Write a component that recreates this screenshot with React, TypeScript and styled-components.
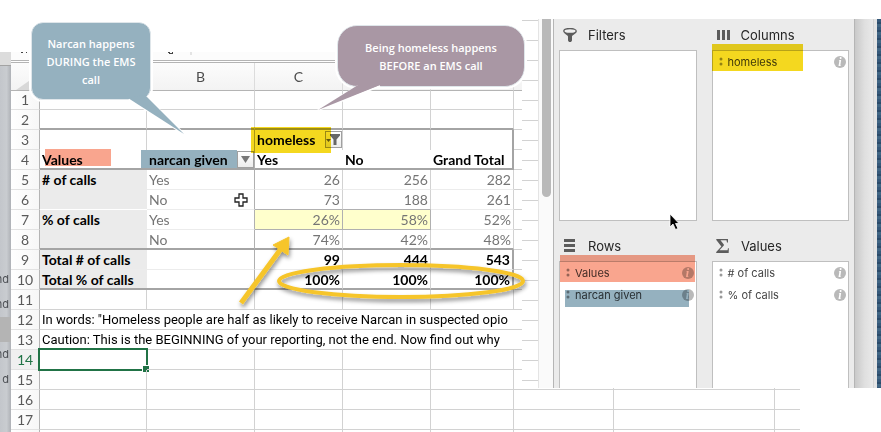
import React from "react";
import styled, { createGlobalStyle, css } from "styled-components";

const GlobalStyle = createGlobalStyle`
  * { box-sizing: border-box; }
  body { margin: 0; background: #fff; overflow: hidden; }
  button { margin: 0; padding: 0; font: inherit; cursor: pointer; }
`;

const ui = `Inter, "Liberation Sans", sans-serif`;
const cellFont = `Lato, "Open Sans", sans-serif`;

const Page = styled.main`
  position: relative;
  display: grid;
  grid-template-columns: 522px minmax(0, 1fr);
  grid-template-rows: 52px auto;
  height: 100vh;
  overflow: hidden;
  font-family: ${ui};
`;

/* ---------- worksheet ---------- */

const Workbook = styled.section`
  grid-column: 1 / 3;
  grid-row: 2;
  display: flex;
  min-width: 0;
`;

const SideStrip = styled.aside`
  flex: 0 0 11px;
  overflow: hidden;
  border-top: 13px solid #dcdcdc;
  background: linear-gradient(90deg, #c3c6cb, #c9ccd0 60%, #aeb1b6);
  color: #4c4f54;
`;

const SideList = styled.ul`
  margin: 0;
  padding: 201px 0 0;
  border-top: 1px solid #a3a3a3;
  list-style: none;
  font-size: 11px;
  line-height: 25px;
`;

const SideItem = styled.li<{ $active?: boolean }>`
  display: flex;
  justify-content: flex-end;
  height: 25px;
  padding-right: 2px;
  background: ${(p) => (p.$active ? "#b4b4b4" : "transparent")};
`;

const Sheet = styled.div`
  flex: none;
`;

const FormulaBar = styled.div`
  display: flex;
  height: 11px;
  border-bottom: 1px solid #b4b4b4;
  background: linear-gradient(#fcfcfc 8px, #b4b4b4 8px 9px, #fff 9px);
`;

const FormulaEdge = styled.svg`
  display: block;
  width: 190px;
  height: 4px;
`;

const Grid = styled.table`
  table-layout: fixed;
  width: 789px;
  border-collapse: separate;
  border-spacing: 0;
  font-family: ${cellFont};
  font-size: 14px;
  line-height: 18px;
  color: #000;
`;

const ColumnHead = styled.th`
  height: 28px;
  padding: 0;
  border-right: 1px solid #dcdcdc;
  border-bottom: 1px solid #b4b4b4;
  background: linear-gradient(#fcfcfc, #f3f3f3);
  font-size: 14px;
  font-weight: 400;
  color: #4d4d4d;
`;

const Corner = styled.svg`
  display: block;
  margin: 12px 0 0 5px;
`;

const RowHead = styled.th<{ $active?: boolean; $first?: boolean }>`
  height: ${(p) => (p.$first ? 19 : 20)}px;
  padding: 0;
  border-right: 1px solid #b4b4b4;
  border-bottom: 1px solid #e2e2e2;
  background: linear-gradient(90deg, #fff, #f7f7f7);
  font-size: 14px;
  font-weight: 400;
  color: #5a5a5a;
  ${(p) => p.$active && css`color: #217346; background: #f0f0f0;`}
`;

type Edge = "none" | "light" | "line" | "mid" | "heavy" | "white";
const edges: Record<Edge, string> = {
  none: "0 solid transparent",
  light: "1px solid #ececec",
  line: "1px solid #d2d2d2",
  mid: "1px solid #b0b0b0",
  heavy: "2px solid #a4a4a4",
  white: "1px solid #fff",
};

const Cell = styled.td<{
  $right?: Edge;
  $bottom?: Edge;
  $fill?: string;
  $bold?: boolean;
  $muted?: boolean;
  $num?: boolean;
}>`
  position: relative;
  padding: ${(p) => (p.$bottom === "heavy" ? 2 : 0)}px 2px 0;
  border-right: ${(p) => edges[p.$right ?? "line"]};
  border-bottom: ${(p) => edges[p.$bottom ?? "line"]};
  background: ${(p) => p.$fill ?? "transparent"};
  font-weight: ${(p) => (p.$bold ? 700 : 400)};
  line-height: ${(p) => (p.$bottom === "heavy" ? 16 : 18)}px;
  color: ${(p) => (p.$muted ? "#757575" : "#000")};
  text-align: ${(p) => (p.$num ? "right" : "left")};
  white-space: nowrap;
`;

const NoteCell = styled(Cell)`
  font-family: Roboto, "Open Sans", sans-serif;
  font-size: 13px;
`;

const Label = styled.span`
  position: relative;
  z-index: 1;
`;

const Mark = styled.span<{ $tone: "coral" | "blue" | "yellow" }>`
  position: absolute;
  mix-blend-mode: multiply;
  ${(p) => p.$tone === "coral" && css`background: #f9a58e; inset: -1px 36px 2px 5px;`}
  ${(p) => p.$tone === "blue" && css`background: #95b1bf; inset: 0 17px 0 -6px;`}
  ${(p) => p.$tone === "yellow" && css`background: #f4d81f; inset: -3px 11px -3px -4px; z-index: 2;`}
`;

const FilterButton = styled.button`
  position: absolute;
  right: 0;
  top: 1px;
  display: grid;
  place-items: center;
  width: 17px;
  height: 17px;
  border: 1px solid #a0a0a0;
  background: linear-gradient(#fff, #ececec);
`;

const Selection = styled.span`
  position: absolute;
  inset: -2px -2px -2px -2px;
  border: 2px solid #217346;
  &::after {
    content: "";
    position: absolute;
    right: -3px;
    bottom: -3px;
    width: 6px;
    height: 6px;
    border: solid #fff;
    border-width: 1px 0 0 1px;
    background: #217346;
  }
`;

const columnWidths = [29, 107, 108, 88, 88, 83, 100, 161, 25];
const columnNames = ["", "B", "C", "", "", "", "", ""];

const summary = [
  { n: 5, name: "# of calls", given: "Yes", v: ["26", "256", "282"] },
  { n: 6, name: "", given: "No", v: ["73", "188", "261"] },
  { n: 7, name: "% of calls", given: "Yes", v: ["26%", "58%", "52%"] },
  { n: 8, name: "", given: "No", v: ["74%", "42%", "48%"] },
];

const totals = [
  { n: 9, name: "Total # of calls", v: ["99", "444", "543"] },
  { n: 10, name: "Total % of calls", v: ["100%", "100%", "100%"] },
];

const Rest = () => (<><Cell /><Cell /><Cell $right="none" /></>);

const EmptyRow = ({ n, bottom = "line" }: { n: number | null; bottom?: Edge }) => (
  <tr>
    <RowHead scope="row" $first={n === 1}>{n}</RowHead>
    {[0, 1, 2, 3, 4].map((i) => <Cell key={i} $bottom={bottom} />)}
    <Rest />
  </tr>
);

const Worksheet = () => (
  <Grid>
    <colgroup>{columnWidths.map((w, i) => <col key={i} width={w} />)}</colgroup>
    <thead>
      <tr>
        <ColumnHead><Corner width="20" height="14"><path d="M20 0V14H0Z" fill="#d8d8d8" /></Corner></ColumnHead>
        {columnNames.map((c, i) => <ColumnHead key={i} scope="col">{c}</ColumnHead>)}
      </tr>
    </thead>
    <tbody>
      <EmptyRow n={1} />
      <EmptyRow n={2} bottom="heavy" />
      <tr>
        <RowHead scope="row">3</RowHead>
        <Cell $bottom="none" />
        <Cell $bottom="none" $right="mid" />
        <Cell $bottom="none" $bold>
          homeless
          <FilterButton aria-label="Filter homeless">
            <svg width="15" height="13" fill="#666"><path d="M0 6H5L2.500 9ZM4 1H14V2.500L10.500 6.500V12H7.500V6.500L4 2.500Z" /></svg>
          </FilterButton>
          <Mark $tone="yellow" />
        </Cell>
        <Cell $bottom="none" />
        <Cell $bottom="none" $right="heavy" />
        <Rest />
      </tr>
      <tr>
        <RowHead scope="row">4</RowHead>
        <Cell $bottom="heavy" $right="none" $bold><Mark $tone="coral" /><Label>Values</Label></Cell>
        <Cell $bottom="heavy" $right="mid" $bold>
          <Mark $tone="blue" /><Label>narcan given</Label>
          <FilterButton aria-label="Filter narcan given">
            <svg width="9" height="7" fill="#777"><path d="M0 0H9L4.500 7Z" /></svg>
          </FilterButton>
        </Cell>
        <Cell $bottom="heavy" $right="none" $bold>Yes</Cell>
        <Cell $bottom="heavy" $right="none" $bold>No</Cell>
        <Cell $bottom="heavy" $right="heavy" $bold>Grand Total</Cell>
        <Rest />
      </tr>
      {summary.map((r) => {
        const last = r.n === 8;
        const edge: Edge = last ? "heavy" : "light";
        const lit = r.n === 7 ? "#ffffcc" : undefined;
        const yb: Edge = last ? "heavy" : r.n === 5 ? "light" : "mid";
        return (
          <tr key={r.n}>
            <RowHead scope="row">{r.n}</RowHead>
            <Cell $bold $fill="#ebebeb" $right="none" $bottom={last ? "heavy" : r.n === 6 ? "white" : "none"}>{r.name}</Cell>
            <Cell $muted $bottom={edge} $right="mid">{r.given}</Cell>
            <Cell $muted $num $bottom={yb} $fill={lit} $right={lit ? "mid" : "line"}>{r.v[0]}</Cell>
            <Cell $muted $num $bottom={yb} $fill={lit} $right={lit ? "mid" : "line"}>{r.v[1]}</Cell>
            <Cell $muted $num $bottom={edge}>{r.v[2]}</Cell>
            <Rest />
          </tr>
        );
      })}
      {totals.map((r) => {
        const edge: Edge = r.n === 10 ? "heavy" : "light";
        return (
          <tr key={r.n}>
            <RowHead scope="row">{r.n}</RowHead>
            <Cell $bold $fill="#ebebeb" $right="none" $bottom={edge}>{r.name}</Cell>
            <Cell $bottom={edge} $right="mid" />
            <Cell $bold $num $bottom={edge}>{r.v[0]}</Cell>
            <Cell $bold $num $bottom={edge}>{r.v[1]}</Cell>
            <Cell $bold $num $bottom={edge} $right="heavy">{r.v[2]}</Cell>
            <Rest />
          </tr>
        );
      })}
      <EmptyRow n={11} />
      <tr>
        <RowHead scope="row">12</RowHead>
        <NoteCell colSpan={8}>In words: "Homeless people are half as likely to receive Narcan in suspected opio</NoteCell>
      </tr>
      <tr>
        <RowHead scope="row">13</RowHead>
        <NoteCell colSpan={8}>Caution: This is the BEGINNING of your reporting, not the end. Now find out why</NoteCell>
      </tr>
      <tr>
        <RowHead scope="row" $active>14</RowHead>
        <Cell><Selection /></Cell>
        <Cell /><Cell /><Cell /><Cell />
        <Rest />
      </tr>
      <EmptyRow n={15} />
      <EmptyRow n={16} />
      <EmptyRow n={17} />
      <EmptyRow n={null} />
    </tbody>
  </Grid>
);

/* ---------- field panel ---------- */

const PanelShell = styled.section`
  grid-column: 2;
  grid-row: 1 / 3;
  align-self: start;
  z-index: 1;
  display: flex;
  margin-top: 19px;
  background: #fff;
`;

const RuledEdge = styled.div`
  flex: 0 0 16px;
  background: repeating-linear-gradient(#fff 0 1px, #d2d2d2 1px 2px, #fff 2px 20px);
`;

const ScrollTrack = styled.div`
  flex: 0 0 15px;
  padding: 0 2px 0 3px;
  border-left: 1px solid #e4e4e4;
  background: #fafafa;
`;

const ScrollThumb = styled.div`
  height: 178px;
  border-radius: 0 0 5px 5px;
  background: #b9b9b9;
`;

const Pane = styled.div`
  flex: 1;
  display: grid;
  grid-template-columns: 1fr 1fr;
  column-gap: 15px;
  padding: 0 5px;
  border: solid #b5b5b5;
  border-width: 0 1px;
  background: #ebebeb;
`;

const Zone = styled.section<{ $lower?: boolean }>`
  padding-top: ${(p) => (p.$lower ? 9 : 0)}px;
`;

const ZoneTitle = styled.h2`
  display: flex;
  align-items: center;
  gap: 11px;
  height: 31px;
  margin: 0;
  padding: 1px 0 0 4px;
  font-size: 13px;
  font-weight: 400;
  line-height: 16px;
  color: #262626;
  svg { flex: 0 0 14px; }
`;

const Sigma = styled.span`
  flex: 0 0 14px;
  font: 700 22px/22px "Liberation Serif", serif;
  color: #5c5c5c;
`;

const ZoneBox = styled.ul<{ $open?: boolean }>`
  height: ${(p) => (p.$open ? 127 : 171)}px;
  margin: 0;
  padding: 0;
  border: 1px solid #bfbfbf;
  border-bottom-width: ${(p) => (p.$open ? 0 : 1)}px;
  background: #fff;
  list-style: none;
`;

const Field = styled.li`
  position: relative;
  display: flex;
  align-items: center;
  gap: 5px;
  height: 22px;
  padding: 0 2px 0 6px;
  font-size: 11px;
  line-height: 14px;
  color: #454545;
`;

const FieldName = styled.span`
  flex: 1;
`;

const InfoButton = styled.button`
  width: 12px;
  height: 12px;
  border: 0;
  border-radius: 50%;
  background: #b9b9b9;
  color: #fff;
  font: italic 700 12px/12px "Liberation Serif", serif;
`;

const FieldMark = styled.span<{ $tone: "coral" | "blue" | "yellow" }>`
  position: absolute;
  mix-blend-mode: multiply;
  pointer-events: none;
  ${(p) => p.$tone === "coral" && css`background: #f9a58e; inset: -7px 1px 2px 0;`}
  ${(p) => p.$tone === "blue" && css`background: #95b1bf; inset: 6px 7px -1px 5px;`}
  ${(p) => p.$tone === "yellow" && css`background: #f4d81f; inset: -7px 45px 2px -1px;`}
`;

const WindowEdge = styled.div`
  flex: 0 0 22px;
  border-right: 3px solid #e4e4e4;
  background: linear-gradient(90deg, #c9c9c9, #dfdfdf 50%, #e9e9e9 94%, #c4c4c4);
`;

const Backdrop = styled.div`
  flex: 0 0 4px;
  background: repeating-linear-gradient(#36597a 0 3px, #2b4b6a 3px 5px, #416684 5px 8px);
`;

const Grip = () => (
  <svg width="4" height="10" fill="#000" fillOpacity="0.4"><circle cx="2" cy="2" r="1.500" /><circle cx="2" cy="7" r="1.500" /></svg>
);

type FieldDef = { name: string; tone?: "coral" | "blue" | "yellow" };

const DropZone = ({ title, icon, lower, fields }: { title: string; icon: React.ReactNode; lower?: boolean; fields: FieldDef[] }) => (
  <Zone $lower={lower}>
    <ZoneTitle>{icon}{title}</ZoneTitle>
    <ZoneBox $open={lower}>
      {fields.map((f) => (
        <Field key={f.name}>
          <Grip />
          <FieldName>{f.name}</FieldName>
          <InfoButton aria-label={`About ${f.name}`}>i</InfoButton>
          {f.tone && <FieldMark $tone={f.tone} />}
        </Field>
      ))}
    </ZoneBox>
  </Zone>
);

const FunnelIcon = () => (
  <svg width="14" height="14" viewBox="0 0 14 14">
    <path d="M0.500 3.500C1 6 5 7 5 8.500V12.500L6 14H8L9 12.500V8.500C9 7 13 6 13.500 3.500Z" fill="#5c5c5c" />
    <ellipse cx="7" cy="3" rx="6.200" ry="2.500" fill="#efefef" stroke="#5c5c5c" strokeWidth="1.300" />
  </svg>
);
const ColumnsIcon = () => (
  <svg width="14" height="14" fill="#5c5c5c"><path d="M1 2H4V12H1ZM6 2H9V12H6ZM11 2H14V12H11Z" /></svg>
);
const RowsIcon = () => (
  <svg width="14" height="14" fill="#5c5c5c"><path d="M1 0H12V3H1ZM1 5H12V8H1ZM1 10H12V13H1Z" /></svg>
);

/* ---------- annotations ---------- */

const Callout = styled.p<{ $tone: "blue" | "mauve" }>`
  position: absolute;
  z-index: 3;
  display: grid;
  place-items: center;
  margin: 0;
  border: 1px solid #dfe6ea;
  outline: 2px solid #fff;
  color: #fff;
  font: 600 11px/18px "Open Sans", sans-serif;
  text-align: center;
  white-space: pre-line;
  ${(p) => p.$tone === "blue"
    ? css`left: 31px; top: 22px; width: 120px; height: 78px; padding-top: 2px; border-radius: 12px; background: #95b1bf;`
    : css`left: 337px; top: 25px; width: 188px; height: 62px; padding-top: 2px; border-radius: 20px; background: #a997a4;`}
`;

const Drawing = styled.svg`
  position: absolute;
  left: 0;
  top: 0;
  z-index: 4;
  pointer-events: none;
`;

const Annotations = () => (
  <>
    <Callout $tone="blue">{"Narcan happens\nDURING the EMS\ncall"}</Callout>
    <Callout $tone="mauve">{"Being homeless happens\nBEFORE an EMS call"}</Callout>
    <Drawing width="700" height="320" aria-hidden="true">
      <defs>
        <filter id="shade" x="-10%" y="-30%" width="120%" height="180%">
          <feDropShadow dx="1" dy="3" stdDeviation="2" floodOpacity="0.45" />
        </filter>
      </defs>
      <path d="M129 99L184 134L146 97" fill="#95b1bf" stroke="#fff" strokeWidth="2" />
      <path d="M128 98L184 134L145 95Z" fill="#95b1bf" />
      <path d="M358 86L318 110L380 86" fill="#a997a4" stroke="#fff" strokeWidth="2" />
      <path d="M358 85L318 110L380 85Z" fill="#a997a4" />
      <g filter="url(#shade)">
        <path d="M241 303L283 246" stroke="#f6c52b" strokeWidth="5" />
        <path d="M289 237L273 245L288 255Z" fill="#f6c52b" stroke="#f6c52b" />
        <ellipse cx="401" cy="281" rx="122" ry="16" fill="none" stroke="#f6c52b" strokeWidth="4" />
      </g>
      <path d="M239 194H243V198H247V202H243V206H239V202H235V198H239Z" fill="#fff" stroke="#222" strokeWidth="1.300" />
      <path d="M670 214V227L673 224L675.500 229.500L678 228.500L675.500 223.500H679Z" fill="#000" stroke="#fff" strokeWidth="0.800" />
    </Drawing>
  </>
);

export default function App() {
  return (
    <>
      <GlobalStyle />
      <Page>
        <Workbook aria-label="Worksheet">
          <SideStrip>
            <SideList>
              <SideItem>nd</SideItem>
              <SideItem>nd</SideItem>
              <SideItem $active />
              <SideItem>nd</SideItem>
              <SideItem>d</SideItem>
            </SideList>
          </SideStrip>
          <Sheet>
            <FormulaBar>
              <FormulaEdge aria-hidden="true">
                <path d="M10 0H12V1H10ZM15 0H16V1H15ZM157 0H159V1H157ZM162 0V2H158V1H161V0Z" fill="#444" />
                <path d="M180 0V3" stroke="#ccc" />
              </FormulaEdge>
            </FormulaBar>
            <Worksheet />
          </Sheet>
        </Workbook>
        <PanelShell aria-label="PivotTable fields">
          <RuledEdge />
          <ScrollTrack><ScrollThumb /></ScrollTrack>
          <Pane>
            <DropZone title="Filters" icon={<FunnelIcon />} fields={[]} />
            <DropZone title="Columns" icon={<ColumnsIcon />} fields={[{ name: "homeless", tone: "yellow" }]} />
            <DropZone title="Rows" lower icon={<RowsIcon />} fields={[{ name: "Values", tone: "coral" }, { name: "narcan given", tone: "blue" }]} />
            <DropZone title="Values" lower icon={<Sigma>Σ</Sigma>} fields={[{ name: "# of calls" }, { name: "% of calls" }]} />
          </Pane>
          <WindowEdge />
          <Backdrop />
        </PanelShell>
        <Annotations />
      </Page>
    </>
  );
}
